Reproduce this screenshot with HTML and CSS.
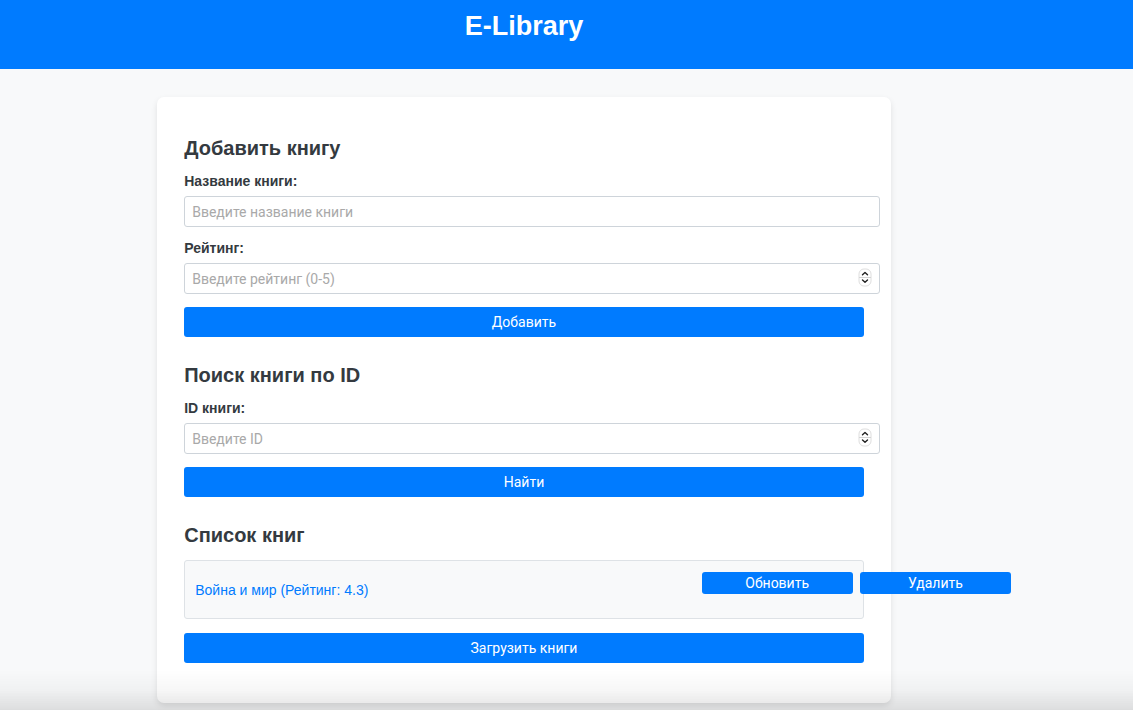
FILE: index.html
```html
<!DOCTYPE html>
<html lang="ru">
<head>
<meta charset="utf-8">
<meta name="viewport" content="width=device-width, initial-scale=1">
<title>E-Library</title>
<link rel="stylesheet" href="styles.css">
</head>
<body>
<header class="site-header">
  <h1 class="site-title">E-Library</h1>
</header>
<main class="page">
  <div class="card">
    <section class="section">
      <h2 class="section-title">Добавить книгу</h2>
      <form>
        <div class="field">
          <label class="label" for="title">Название книги:</label>
          <input class="input" id="title" type="text" placeholder="Введите название книги">
        </div>
        <div class="field">
          <label class="label" for="rating">Рейтинг:</label>
          <div class="number">
            <input class="input" id="rating" type="number" min="0" max="5" step="0.1" placeholder="Введите рейтинг (0-5)">
            <svg class="stepper" viewBox="0 0 14 20" aria-hidden="true"><rect class="stepper-box" x="1" y="1" width="12" height="17" rx="5"/><path class="stepper-line" d="M1 9.500H13"/><path class="stepper-arrow" d="M4.500 6.800L7 4.500L9.500 6.800M4.500 12L7 14.300L9.500 12"/></svg>
          </div>
        </div>
        <button class="button" type="button">Добавить</button>
      </form>
    </section>
    <section class="section">
      <h2 class="section-title">Поиск книги по ID</h2>
      <form>
        <div class="field">
          <label class="label" for="book-id">ID книги:</label>
          <div class="number">
            <input class="input" id="book-id" type="number" placeholder="Введите ID">
            <svg class="stepper" viewBox="0 0 14 20" aria-hidden="true"><rect class="stepper-box" x="1" y="1" width="12" height="17" rx="5"/><path class="stepper-line" d="M1 9.500H13"/><path class="stepper-arrow" d="M4.500 6.800L7 4.500L9.500 6.800M4.500 12L7 14.300L9.500 12"/></svg>
          </div>
        </div>
        <button class="button" type="button">Найти</button>
      </form>
    </section>
    <section class="section">
      <h2 class="section-title">Список книг</h2>
      <ul class="books">
        <li class="book">
          <span class="book-name">Война и мир (Рейтинг: 4.3)</span>
          <div class="book-actions">
            <button class="button button-small" type="button">Обновить</button>
            <button class="button button-small" type="button">Удалить</button>
          </div>
        </li>
      </ul>
      <button class="button" type="button">Загрузить книги</button>
    </section>
  </div>
</main>
</body>
</html>
```
FILE: styles.css
```css
body {
  margin: 0;
  background: #f8f9fa;
  color: #343a40;
  font-family: "Liberation Sans", Arial, sans-serif;
  font-size: 14px;
}

body::after {
  content: "";
  position: fixed;
  inset: auto 0 0;
  height: 40px;
  background: linear-gradient(transparent, rgba(0, 0, 0, 0.03) 50%, rgba(0, 0, 0, 0.11));
  pointer-events: none;
}

.site-header {
  padding: 10px 85px 27px 0;
  background: #007bff;
  color: #fff;
  text-align: center;
}

.site-title {
  margin: 0;
  font-size: 27px;
  line-height: 32px;
}

.page {
  padding: 28px 85px 28px 0;
}

.card {
  box-sizing: border-box;
  width: 70%;
  margin: 0 auto;
  padding: 38px 27px 40px;
  border-radius: 7px;
  background: #fff;
  box-shadow: 0 3px 6px rgba(0, 0, 0, 0.1);
}

.section + .section {
  margin-top: 25px;
}

.section-title {
  margin: 0 0 12px;
  font-size: 20px;
  line-height: 26px;
}

.field {
  margin-bottom: 13px;
}

.label {
  display: block;
  margin-bottom: 7px;
  font-size: 14px;
  font-weight: bold;
  line-height: 16px;
}

.input {
  display: block;
  width: 100%;
  height: 15px;
  padding: 7px;
  border: 1px solid #ced4da;
  border-radius: 3px;
  background: #fff;
  color: #343a40;
  font: 14px Roboto, sans-serif;
  appearance: textfield;
}

.input::placeholder {
  color: #a9a9a9;
}

.input::-webkit-inner-spin-button {
  appearance: none;
}

.number {
  position: relative;
}

.stepper {
  position: absolute;
  top: 5px;
  right: -8px;
  width: 14px;
  height: 20px;
  fill: none;
  pointer-events: none;
}

.stepper-box {
  fill: #fff;
  stroke: #dedede;
}

.stepper-line {
  stroke: #d4d4d4;
}

.stepper-arrow {
  stroke: #222;
  stroke-width: 1.4;
  stroke-linecap: round;
  stroke-linejoin: round;
}

.button {
  display: block;
  width: 100%;
  padding: 6px;
  border: 0;
  border-radius: 3px;
  background: #007bff;
  color: #fff;
  font: 14px/18px Roboto, sans-serif;
  cursor: pointer;
}

.books {
  margin: 0 0 14px;
  padding: 0;
  list-style: none;
}

.book {
  display: flex;
  justify-content: space-between;
  padding: 11px 10px 9px;
  border: 1px solid #dee2e6;
  border-radius: 3px;
  background: #f8f9fa;
}

.book-name {
  padding: 10px 0;
  color: #007bff;
  line-height: 17px;
}

.book-actions {
  display: flex;
  align-items: flex-start;
  gap: 7px;
  width: 23%;
}

.button-small {
  flex: 0 0 100%;
  padding: 2px;
}
```
